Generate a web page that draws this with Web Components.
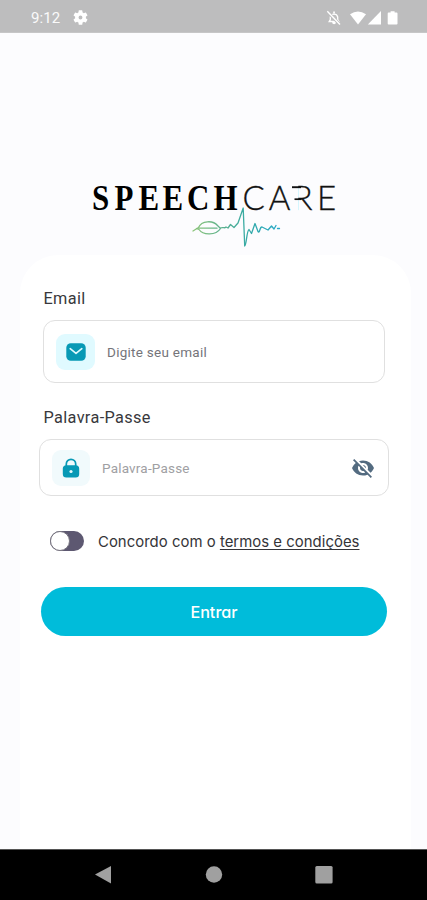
<!DOCTYPE html>
<html lang="pt">
<head>
<meta charset="utf-8">
<title>SpeechCare</title>
<style>
html,body{margin:0;height:100%}
body{font-family:Roboto,"Liberation Sans",sans-serif;overflow:hidden}
</style>
</head>
<body>
<login-screen></login-screen>
<script>
function define(name, html){
  const t=document.createElement('template');
  t.innerHTML=html;
  customElements.define(name,class extends HTMLElement{
    constructor(){super();this.attachShadow({mode:'open'}).append(t.content.cloneNode(true));}
  });
}

define('status-bar',`<style>
:host{display:flex;height:33px;box-sizing:border-box;padding:3px 28px 0 31px;align-items:center;background:#bdbdbe;color:#fafafa;font-size:15px;border-bottom:1px solid #c6c6c7}
span{letter-spacing:.1px;width:42px}
.gap{flex:1}
svg{display:block;fill:#fff}
</style><span>9:12</span>
<svg width="15" height="15" viewBox="2 2 20 20"><path d="M19.14 12.94c.04-.3.06-.61.06-.94s-.02-.64-.07-.94l2.03-1.58a.49.49 0 0 0 .12-.61l-1.92-3.32a.49.49 0 0 0-.59-.22l-2.39.96a7 7 0 0 0-1.62-.94l-.36-2.54A.48.48 0 0 0 13.92 2.400h-3.84a.48.48 0 0 0-.47.41l-.36 2.54c-.59.24-1.13.57-1.62.94l-2.39-.96a.48.48 0 0 0-.59.22L2.740 8.870a.48.48 0 0 0 .12.61l2.030 1.580A7 7 0 0 0 4.800 12c0 .31.02.64.07.94l-2.030 1.580a.49.49 0 0 0-.12.61l1.920 3.320c.12.22.37.29.59.22l2.390-.96c.5.38 1.030.7 1.620.94l.36 2.540c.05.24.24.41.48.41h3.840c.24 0 .44-.17.47-.41l.36-2.540a7 7 0 0 0 1.620-.94l2.390.96c.22.08.47 0 .59-.22l1.920-3.320a.48.48 0 0 0-.12-.61zM12 14.600a2.600 2.600 0 1 1 0-5.200 2.600 2.600 0 0 1 0 5.200z"/></svg>
<div class="gap"></div>
<svg width="73" height="18" viewBox="0 0 73 18">
<path d="M3.200 12.500h9.600l-1.100-1.800V8A3.800 3.800 0 0 0 4.300 8v2.700zM6.800 13.300h2.500a1.250 1.250 0 0 1-2.500 0z" fill="none" stroke="#fff" stroke-width="1.300"/><path d="M7.200 2.600h1.700v2H7.200z"/>
<path d="M1.500 2.800L14 15.600" stroke="#bdbdbe" stroke-width="3"/><path d="M1.300 2.300L14 15.600" stroke="#fff" stroke-width="1.400"/>
<path d="M24 5.200Q32-.2 40 5.200L32 15.400z"/><path d="M55 2v13.400H41.800z"/><path d="M62.600 3.500h2V2.200h4v1.300h2q.9 0 .9.900v10.300q0 .8-.9.800h-8q-.9 0-.9-.8V4.400q0-.9.900-.9z"/>
</svg>`);

define('brand-logo',`<style>:host{display:block;width:250px;height:70px}svg{display:block;overflow:visible}
.s{font:bold 36px "Liberation Serif",serif}.c{font:300 33px Lato,sans-serif;fill:#111;stroke:#111;stroke-width:.35px}</style>
<svg width="250" height="70" viewBox="0 0 250 70">
<defs><linearGradient id="g" gradientUnits="userSpaceOnUse" x1="102" x2="190" y1="0" y2="0"><stop offset="0" stop-color="#8cc47a"/><stop offset=".35" stop-color="#58b091"/><stop offset=".6" stop-color="#36aaa5"/><stop offset="1" stop-color="#27a9cc"/></linearGradient></defs>
<text class="s" transform="translate(0 30) scale(.86 1)" x="0 26.300 54 82 110.500 141.200">SPEECH</text>
<text class="c" y="30" x="150.600 176.800 200.500 225">CARE</text>
<path d="M201 5h5.300v9.500H201zM201 14.500h5.300v17H201z" fill="#fcfcfe"/><path d="M200 7.200h9" stroke="#111" stroke-width="1.900"/><path d="M202.500 19.200h7" stroke="#111" stroke-width="1.700"/>
<g fill="none" stroke="url(#g)" stroke-width="1.300" stroke-linejoin="round" stroke-linecap="round">
<path d="M101 51L106.500 47.500C109.500 40.500 121 40 125.500 45.500L128.500 48.500C124 55.500 111 55.500 107 49.500L104.500 48.500M107 48.200H125M128 48C132 46.500 132 49 134 47L136 48 138.500 44.500 142 47.500 146 43 151.200 28 152.700 66C154.500 66 154.500 51 157 49.500L159.500 53.500 163 43.500 166 51.500C168 54 167.500 46.500 170 47L174 49 176 50 179.500 46 182 49 184 45.500M185.500 48.500H187.500"/>
</g></svg>`);

define('form-field',`<style>
:host{display:flex;box-sizing:border-box;align-items:center;height:63px;border:1.500px solid #e0e0e0;border-radius:12px;background:#fff;padding:0 11px 0 12px;color:#74747a;font-size:13.500px}
.tile{display:grid;place-items:center;width:var(--tw,39px);height:36px;border-radius:9px;background:var(--tile,#e0faff)}
.t{flex:1;margin-left:12px;letter-spacing:var(--ls,.27px)}
</style><div class="tile"><slot name="icon"></slot></div><div class="t"><slot></slot></div><slot name="end"></slot>`);

define('toggle-switch',`<style>:host{display:flex;width:34px;height:20px;box-sizing:border-box;border-radius:10px;background:#5d5871}
i{width:20px;height:20px;box-sizing:border-box;border-radius:50%;background:#fff;border:1px solid #77747f}</style><i></i>`);

define('pill-button',`<style>:host{display:flex;align-items:center;justify-content:center;height:49px;border-radius:25px;background:#00bcda;color:#fff;font:500 16.200px Inter,sans-serif;font-feature-settings:"cv11"}</style><slot></slot>`);

define('nav-bar',`<style>:host{display:flex;height:51px;box-sizing:border-box;background:#000;border-top:1px solid #555;justify-content:center}svg{display:block}</style>
<svg width="427" height="50" viewBox="0 849 427 50" fill="#a0a0a0"><path d="M95 873.500L111 865v17.500z"/><circle cx="214" cy="873.500" r="8.200"/><rect x="315.300" y="865" width="17.300" height="17.500" rx="1.500"/></svg>`);

define('login-screen',`<style>
:host{display:flex;flex-direction:column;width:427px;height:900px;background:#fcfcfe}
brand-logo{margin:147px 0 0 92px}
main{flex:1;margin:5px 16px 0 20px;background:#fff;border-radius:38px 38px 0 0;padding:34px 24px 0 23px;display:flex;flex-direction:column}
label{font-size:16.300px;line-height:20px;color:#38383c;letter-spacing:.35px;margin-left:.5px}
.one{margin:11px 2px 0 0}
.two{margin:11px -2px 0 -4px;height:57px;--tile:#f1fafc;--tw:38px;--ls:.2px;color:#a0a0a3}
.two svg[slot=end]{margin-right:2px}
svg{display:block}
.agree{display:flex;align-items:center;margin:34px 0 0 7px;height:22px;font:14.900px Inter,sans-serif;color:#343438}
.agree toggle-switch{flex:none}
.agree p{margin:1px 0 0 14px;white-space:nowrap;letter-spacing:.03px}
.agree u{text-underline-offset:2px;text-decoration-thickness:1px;text-decoration-skip-ink:none}
pill-button{margin:35px 0 0 -2px}
</style>
<status-bar></status-bar>
<brand-logo></brand-logo>
<main>
<label>Email</label>
<form-field class="one"><svg slot="icon" width="20" height="18" viewBox="0 0 20 18"><rect x=".3" y=".3" width="19.400" height="17.400" rx="4.500" fill="#0799b5"/><path d="M4.200 5.700L10 10.300 15.800 5.700" fill="none" stroke="#dcf8fd" stroke-width="1.700" stroke-linecap="round" stroke-linejoin="round"/></svg>Digite seu email</form-field>
<label style="margin-top:25px">Palavra-Passe</label>
<form-field class="two"><svg slot="icon" width="18" height="20" viewBox="0 0 18 20"><path d="M4.300 9V6a4.700 4.700 0 0 1 9.400 0v3" fill="none" stroke="#0799b5" stroke-width="1.700"/><rect x=".8" y="7.300" width="16.400" height="12.300" rx="3.500" fill="#0799b5"/><circle cx="9" cy="13.500" r="1.600" fill="#e4f8fb"/></svg>Palavra-Passe<svg slot="end" width="24" height="24" viewBox="0 0 24 24" fill="#536b80"><path d="M12 7c2.760 0 5 2.240 5 5 0 .65-.13 1.260-.36 1.830l2.920 2.920c1.510-1.260 2.700-2.890 3.430-4.750-1.730-4.390-6-7.500-11-7.500-1.400 0-2.740.25-3.980.7l2.160 2.160C10.740 7.130 11.350 7 12 7zM2 4.270l2.280 2.280.46.460A11.800 11.800 0 0 0 1 12c1.730 4.390 6 7.500 11 7.500 1.550 0 3.030-.3 4.380-.84l.42.420L19.730 22 21 20.730 3.270 3 2 4.270zM7.530 9.800l1.550 1.550c-.05.210-.08.430-.08.650 0 1.660 1.340 3 3 3 .22 0 .44-.03.650-.08l1.550 1.550c-.67.330-1.410.530-2.200.530-2.760 0-5-2.240-5-5 0-.79.200-1.530.530-2.200zm4.310-.78l3.150 3.150.02-.16c0-1.660-1.340-3-3-3l-.17.010z"/></svg></form-field>
<div class="agree"><toggle-switch></toggle-switch><p>Concordo com o <u>termos e condições</u></p></div>
<pill-button>Entrar</pill-button>
</main>
<nav-bar></nav-bar>`);
</script>
</body>
</html>
